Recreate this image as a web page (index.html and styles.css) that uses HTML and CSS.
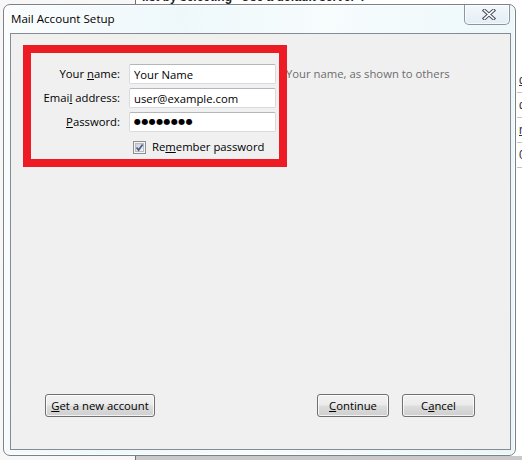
FILE: index.html
```html
<!DOCTYPE html>
<html lang="en">
<head>
<meta charset="utf-8">
<title>Mail Account Setup</title>
<link rel="stylesheet" href="styles.css">
</head>
<body>
<div class="desktop">
  <div class="behind">
    <div class="behind-text">list by selecting "Use a default server".</div>
    <div class="behind-side">
      <div class="side-row"><u>d</u></div>
      <div class="side-row">d</div>
      <div class="side-row"><u>r</u></div>
      <div class="side-row">0</div>
    </div>
    <div class="behind-foot"></div>
  </div>

  <div class="window">
    <div class="titlebar">
      <span class="title">Mail Account Setup</span>
      <button class="close" aria-label="Close">
        <svg width="14" height="11" viewBox="0 0 14 11">
          <path d="M2.5 1.5 L11.5 9.5 M11.5 1.5 L2.5 9.5" stroke="#4b4f5c" stroke-width="3.6" stroke-linecap="square" fill="none"/>
          <path d="M2.5 1.5 L11.5 9.5 M11.5 1.5 L2.5 9.5" stroke="#ffffff" stroke-width="1.6" stroke-linecap="square" fill="none"/>
        </svg>
      </button>
    </div>
    <div class="client">
      <div class="form">
        <label class="lbl" for="name">Your <u>n</u>ame:</label>
        <input class="field" id="name" type="text" value="Your Name">
        <span class="hint">Your name, as shown to others</span>

        <label class="lbl" for="email">Emai<u>l</u> address:</label>
        <input class="field" id="email" type="text" value="user@example.com">
        <span></span>

        <label class="lbl"><u>P</u>assword:</label>
        <div class="field pw">●●●●●●●●</div>
        <span></span>

        <span></span>
        <label class="check">
          <svg class="box" width="13" height="13" viewBox="0 0 13 13">
            <defs>
              <linearGradient id="cb" x1="0" y1="0" x2="1" y2="1">
                <stop offset="0" stop-color="#c9ccd2"/>
                <stop offset="1" stop-color="#f7f7f7"/>
              </linearGradient>
            </defs>
            <rect x="0.5" y="0.5" width="12" height="12" fill="#f4f4f4" stroke="#8e8f8f"/>
            <rect x="2.5" y="2.5" width="8" height="8" fill="url(#cb)" stroke="#b9bcc3"/>
            <path d="M3.6 6.4 L5.6 9 L9.6 3.4" stroke="#4a5f8e" stroke-width="1.7" fill="none"/>
          </svg>
          <span>Re<u>m</u>ember password</span>
        </label>
        <span></span>
      </div>

      <div class="buttons">
        <button class="btn wide"><u>G</u>et a new account</button>
        <div class="btn-group">
          <button class="btn w72"><u>C</u>ontinue</button>
          <button class="btn w73">C<u>a</u>ncel</button>
        </div>
      </div>

      <div class="highlight"></div>
    </div>
  </div>
</div>
</body>
</html>
```

FILE: styles.css
```css
html, body {
  margin: 0;
  padding: 0;
}

body {
  width: 522px;
  height: 460px;
  overflow: hidden;
  background: #ffffff;
  font-family: "Open Sans", "Noto Sans", sans-serif;
  font-size: 11.3px;
  color: #000;
}

.desktop {
  position: relative;
  width: 522px;
  height: 460px;
  overflow: hidden;
  background: #f7f7f7;
}

/* window in the background, partly visible */
.behind {
  position: absolute;
  left: 135px;
  top: -20px;
  right: -20px;
  bottom: -20px;
  background: #ffffff;
  border-left: 1px solid #6f6f6f;
}

.behind-text {
  position: absolute;
  left: 6px;
  top: 10px;
  font-family: "Liberation Sans", sans-serif;
  font-weight: bold;
  font-size: 12px;
  color: #222;
}

.behind-side {
  position: absolute;
  left: 381px;
  top: 88px;
  display: flex;
  flex-direction: column;
  font-family: "Liberation Sans", sans-serif;
  font-size: 12px;
  color: #333;
}

.side-row {
  height: 24px;
  line-height: 24px;
  border-bottom: 1px solid #c4c4c4;
  width: 40px;
  padding-left: 2px;
}

.behind-foot {
  position: absolute;
  left: 0;
  right: 0;
  bottom: 0;
  height: 24px;
  background: #c9c9c9;
}

/* the dialog */
.window {
  position: absolute;
  left: 3px;
  top: 4px;
  width: 513px;
  height: 452px;
  box-sizing: border-box;
  border: 1px solid #7d8287;
  border-radius: 7px;
  background: linear-gradient(100deg, #fbfdfe 0%, #eef8fb 30%, #f7fcfd 55%, #e9f6f9 100%);
  box-shadow: inset 0 0 0 1px rgba(255,255,255,0.8);
  padding: 0 4px 5px 6px;
  display: flex;
  flex-direction: column;
}

.titlebar {
  height: 28px;
  display: flex;
  justify-content: space-between;
  align-items: flex-start;
  margin-left: -6px;
  margin-right: -4px;
}

.title {
  padding: 6px 0 0 7px;
  line-height: 16px;
  font-size: 11.6px;
  color: #000;
  text-shadow: 0 0 6px #ffffff, 0 0 3px #ffffff;
}

.close {
  width: 46px;
  height: 20px;
  margin: 0 5px 0 0;
  padding: 0;
  box-sizing: border-box;
  border: 1px solid #8a96a3;
  border-top: none;
  border-radius: 0 0 5px 5px;
  background: linear-gradient(#f3f8fb, #e3eef3);
  box-shadow: inset 0 0 0 1px rgba(255,255,255,0.7);
  display: flex;
  align-items: center;
  justify-content: center;
}

.close svg {
  display: block;
  margin-left: 3px;
}

.client {
  position: relative;
  flex: 1;
  box-sizing: border-box;
  border: 1px solid #858b91;
  background: #f0f0f0;
  display: flex;
  flex-direction: column;
}

.form {
  display: grid;
  grid-template-columns: 109px 147px auto;
  column-gap: 9px;
  row-gap: 4px;
  align-items: center;
  padding-top: 30px;
}

.lbl {
  text-align: right;
  white-space: nowrap;
  line-height: 16px;
}

.field {
  box-sizing: border-box;
  width: 147px;
  height: 20px;
  margin: 0;
  padding: 0 4px;
  border: 1px solid #d8dadd;
  border-top-color: #b3b6ba;
  border-radius: 2px;
  background: #ffffff;
  font-family: inherit;
  font-size: 11.3px;
  color: #000;
  outline: none;
  line-height: 18px;
}

.pw {
  font-family: "DejaVu Sans", sans-serif;
  font-size: 8px;
  letter-spacing: 0.4px;
  line-height: 18px;
}

.hint {
  color: #6d6d6d;
  white-space: nowrap;
  line-height: 16px;
  padding-left: 1px;
}

.check {
  display: flex;
  align-items: center;
  gap: 6px;
  padding-left: 4px;
  margin-top: 3px;
  line-height: 16px;
  white-space: nowrap;
}

.box {
  display: block;
  flex: none;
}

.buttons {
  margin-top: auto;
  display: flex;
  justify-content: space-between;
  align-items: center;
  padding: 0 35px 32px 34px;
}

.btn-group {
  display: flex;
  gap: 13px;
}

.btn {
  box-sizing: border-box;
  height: 23px;
  padding: 0;
  white-space: nowrap;
  border: 1px solid #707070;
  border-radius: 3px;
  background: linear-gradient(#f2f2f2 0%, #ebebeb 48%, #dddddd 52%, #cfcfcf 100%);
  box-shadow: inset 0 0 0 1px rgba(255,255,255,0.75);
  font-family: inherit;
  font-size: 11.3px;
  color: #000;
  line-height: 19px;
}

.wide { width: 110px; }
.w72 { width: 72px; }
.w73 { width: 73px; }

/* annotation drawn over the form */
.highlight {
  position: absolute;
  left: 12px;
  top: 11px;
  width: 264px;
  height: 122px;
  box-sizing: border-box;
  border: 8px solid #ed1c24;
  pointer-events: none;
}
```
